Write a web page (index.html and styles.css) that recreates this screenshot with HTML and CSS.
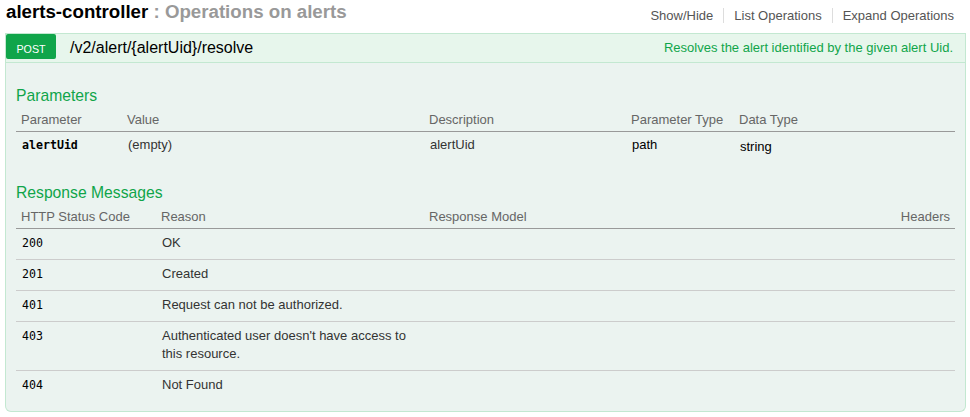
FILE: index.html
```html
<!DOCTYPE html>
<html lang="en">
<head>
    <meta charset="UTF-8">
    <meta name="viewport" content="width=device-width, initial-scale=1.0">
    <title>alerts-controller</title>
    <link rel="stylesheet" href="styles.css">
</head>
<body>
    <div class="resource">
        <div class="resource-heading">
            <h2 class="resource-title">alerts-controller <span class="resource-desc">: Operations on alerts</span></h2>
            <ul class="options">
                <li>Show/Hide</li>
                <li>List Operations</li>
                <li>Expand Operations</li>
            </ul>
        </div>

        <div class="operation">
            <div class="op-heading">
                <span class="method">POST</span>
                <span class="path">/v2/alert/{alertUid}/resolve</span>
                <span class="summary">Resolves the alert identified by the given alert Uid.</span>
            </div>

            <div class="op-content">
                <h4>Parameters</h4>
                <table class="params">
                    <colgroup>
                        <col class="col-name">
                        <col class="col-value">
                        <col class="col-desc">
                        <col class="col-ptype">
                        <col>
                    </colgroup>
                    <thead>
                        <tr>
                            <th>Parameter</th>
                            <th>Value</th>
                            <th>Description</th>
                            <th>Parameter Type</th>
                            <th>Data Type</th>
                        </tr>
                    </thead>
                    <tbody>
                        <tr>
                            <td class="code strong">alertUid</td>
                            <td>(empty)</td>
                            <td>alertUid</td>
                            <td class="dark">path</td>
                            <td class="dark data-type">string</td>
                        </tr>
                    </tbody>
                </table>

                <h4>Response Messages</h4>
                <table class="responses">
                    <colgroup>
                        <col class="col-status">
                        <col class="col-reason">
                        <col>
                        <col class="col-headers">
                    </colgroup>
                    <thead>
                        <tr>
                            <th>HTTP Status Code</th>
                            <th>Reason</th>
                            <th>Response Model</th>
                            <th class="right">Headers</th>
                        </tr>
                    </thead>
                    <tbody>
                        <tr><td class="code">200</td><td>OK</td><td></td><td></td></tr>
                        <tr><td class="code">201</td><td>Created</td><td></td><td></td></tr>
                        <tr><td class="code">401</td><td>Request can not be authorized.</td><td></td><td></td></tr>
                        <tr><td class="code">403</td><td>Authenticated user doesn't have access to this resource.</td><td></td><td></td></tr>
                        <tr><td class="code">404</td><td>Not Found</td><td></td><td></td></tr>
                    </tbody>
                </table>
            </div>
        </div>
    </div>
</body>
</html>
```

FILE: styles.css
```css
body {
    font-family: "Liberation Sans", Arial, sans-serif;
    margin: 0;
    padding: 0;
    background-color: #fff;
    color: #333;
}

.resource {
    margin: 0 4px 0 5px;
}

.resource-heading {
    display: flex;
    justify-content: space-between;
    align-items: flex-start;
    height: 33px;
}

.resource-title {
    margin: 1px 0 0 1px;
    font-size: 18.7px;
    line-height: 22px;
    font-weight: bold;
    color: #000;
}

.resource-desc {
    color: #999;
}

.options {
    display: flex;
    list-style: none;
    margin: 8px 0 0;
    padding: 0;
}

.options li {
    font-size: 13px;
    line-height: 15px;
    color: #555;
    padding: 0 10px;
    border-right: 1px solid #ddd;
}

.options li:last-child {
    border-right: none;
    padding-right: 12px;
}

/* operation block */
.op-heading {
    display: flex;
    align-items: flex-start;
    height: 28px;
    background-color: #e7f6ec;
    border: 1px solid #c3e8d1;
}

.method {
    width: 50px;
    padding: 9px 0 4px;
    font-size: 10.7px;
    line-height: 12px;
    text-align: center;
    color: #fff;
    background-color: #10a54a;
    border-radius: 2px;
}

.path {
    margin-left: 14px;
    font-size: 16px;
    line-height: 28px;
    color: #000;
}

.summary {
    margin-left: auto;
    padding-right: 12px;
    font-size: 13px;
    line-height: 28px;
    color: #10a54a;
}

.op-content {
    background-color: #ebf3f0;
    border: 1px solid #c3e8d1;
    border-top: none;
    border-radius: 0 0 6px 6px;
    padding: 10px 10px 10px;
}

.op-content h4 {
    margin: 13.5px 0 2px;
    font-size: 15.7px;
    line-height: 18px;
    font-weight: normal;
    color: #10a54a;
}

table {
    width: 100%;
    border-collapse: collapse;
    table-layout: fixed;
}

th {
    padding: 5px 5px 4px;
    font-size: 13px;
    line-height: 15px;
    font-weight: normal;
    text-align: left;
    color: #666;
    border-bottom: 1px solid #999;
}

td {
    padding: 5px 6px 7px;
    font-size: 13px;
    line-height: 18px;
    vertical-align: top;
}

th.right {
    text-align: right;
}

/* margin collapses with the next h4, so this is the whole gap */
.params {
    margin-bottom: 21.5px;
}

.params td {
    padding-top: 4px;
}

.params td.data-type {
    padding-top: 6px;
}

.responses td {
    border-bottom: 1px solid #ccc;
}

.responses tr:last-child td {
    border-bottom: none;
}

.col-name { width: 106px; }
.col-value { width: 302px; }
.col-desc { width: 202px; }
.col-ptype { width: 108px; }

.col-status { width: 140px; }
.col-reason { width: 268px; }
.col-headers { width: 150px; }

.code {
    font-family: "DejaVu Sans Mono", "Liberation Mono", monospace;
    font-size: 11.6px;
    color: #000;
}

.strong {
    font-weight: bold;
}

.dark {
    color: #000;
}
```
